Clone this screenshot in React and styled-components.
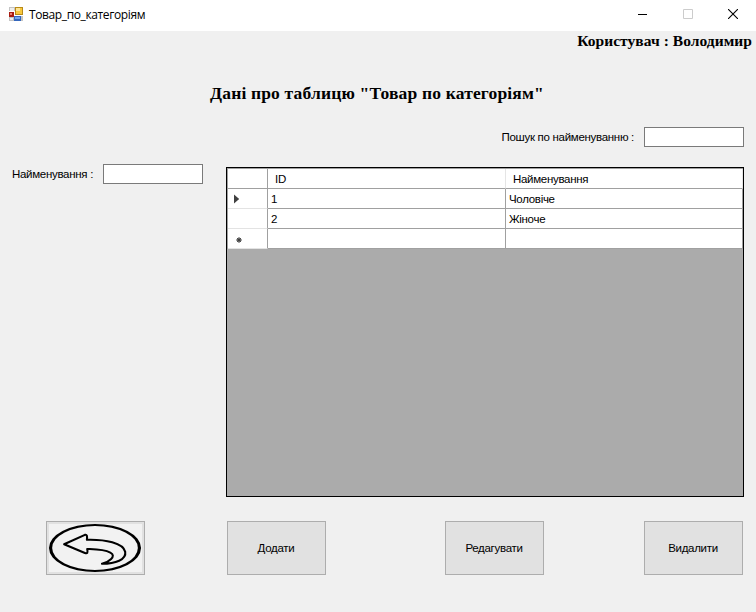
import React from "react";
import styled, { createGlobalStyle } from "styled-components";

const GlobalStyle = createGlobalStyle`
  * { box-sizing: border-box; }
  body { margin: 0; background: #f0f0f0; overflow: hidden; }
`;

const Window = styled.div`
  width: 756px;
  height: 612px;
  display: flex;
  flex-direction: column;
  background: #f0f0f0;
  color: #000;
  font: 11.5px/14px "Liberation Sans", sans-serif;
  letter-spacing: -0.3px;
  white-space: nowrap;
`;

const TitleBar = styled.header`
  height: 31px;
  flex: none;
  display: flex;
  align-items: center;
  background: #fff;
  padding: 0 0 3px 9px;
`;

const WindowTitle = styled.h1`
  margin: 2px auto 0 6px;
  font: 400 12px/16px "Open Sans", sans-serif;
  letter-spacing: -0.38px;
`;

const Controls = styled.div`
  display: flex;
  height: 28px;
`;

const ControlButton = styled.button`
  width: 45.5px;
  padding: 0;
  border: 0;
  background: none;
  display: flex;
  align-items: center;
  justify-content: center;
  color: ${(p) => (p.disabled ? "#ccc" : "#000")};
`;

const UserLabel = styled.div`
  height: 20px;
  padding-right: 4px;
  text-align: right;
  font: bold 15.5px/20px "Liberation Serif", serif;
  letter-spacing: 0.05px;
`;

const Heading = styled.h2`
  margin: 31px 0 0;
  height: 22px;
  padding-right: 2px;
  text-align: center;
  font: bold 17.5px/22px "Liberation Serif", serif;
  letter-spacing: 0.17px;
`;

const SearchRow = styled.div`
  margin-top: 23px;
  padding-right: 12px;
  display: flex;
  justify-content: flex-end;
  align-items: center;
  gap: 10px;
`;

const Label = styled.label`
  margin-top: -1px;
`;

const TextInput = styled.input`
  width: 100px;
  height: 20px;
  padding: 2px;
  border: 1px solid #7a7a7a;
  border-radius: 0;
  background: #fff;
  outline: 0;
`;

const Body = styled.main`
  margin-top: 17px;
  padding: 0 12px;
  display: flex;
  justify-content: space-between;
`;

const Field = styled.div`
  width: 191px;
  height: 20px;
  display: flex;
  align-items: center;
  justify-content: space-between;
`;

const DataGrid = styled.div`
  margin-top: 3px;
  width: 518px;
  height: 330px;
  border: 1px solid #000;
  background: #ababab;
`;

const GridRows = styled.div`
  border-top: 1px solid #a0a0a0;
  border-left: 1px solid #a0a0a0;
`;

const GridRow = styled.div`
  display: grid;
  grid-template-columns: 40px 238px 237px;
  height: 20px;
`;

const Cell = styled.div`
  background: #fff;
  border-right: 1px solid #a0a0a0;
  border-bottom: 1px solid #a0a0a0;
  padding: 3px 0 0 3px;
`;

const HeaderCell = styled(Cell)`
  padding-left: 7px;
  border-right-color: ${(p) => (p.$strong ? "#a0a0a0" : "#e5e5e5")};
`;

const RowHeader = styled(Cell)`
  border-bottom-color: #e3e3e3;
  padding: 0 0 0 5px;
  display: flex;
  align-items: center;
`;

const Footer = styled.footer`
  margin-top: 24px;
  padding: 0 13px 0 46px;
  display: grid;
  grid-template-columns: 181px 218px 199px 99px;
`;

const ActionButton = styled.button`
  width: 99px;
  height: 54px;
  padding: 0 1px 0 0;
  border: 1px solid #adadad;
  border-radius: 0;
  background: ${(p) => (p.$picture ? "#f2f2f2" : "#e1e1e1")};
  box-shadow: ${(p) => (p.$picture ? "inset 0 0 0 2px #e1e1e1" : "none")};
  color: #000;
  font: inherit;
  letter-spacing: inherit;
  display: flex;
  align-items: center;
  justify-content: center;
`;

const FormIcon = () => (
  <svg width="14" height="14" viewBox="0 0 14 14" shapeRendering="crispEdges">
    <path d="M0 0H6V4H0zM0 10H5V14H0zM12 9H14V14H12z" fill="#c4c4c4" />
    <path d="M1 1H5V4H1zM1 11H4V13H1z" fill="#eee" />
    <path d="M0 5H5V10H0z" fill="#a81c12" />
    <path d="M1 6H3V8H1z" fill="#e88170" />
    <path d="M6 0H14V8H6z" fill="#b88a18" />
    <path d="M7 1H13V7H7z" fill="#f7c73c" />
    <path d="M7 1H11V4H7z" fill="#ffe594" />
    <path d="M5 9H12V14H5z" fill="#3467bd" />
    <path d="M6 10H11V12H6z" fill="#76a7ec" />
  </svg>
);

const MinimizeIcon = () => (
  <svg width="10" height="10" shapeRendering="crispEdges">
    <path d="M1 5H10V6H1z" />
    <path d="M10 5H11V6H10z" />
  </svg>
);

const MaximizeIcon = () => (
  <svg width="10" height="10" fill="none" stroke="currentColor">
    <path d="M.5 .5H9.5V9.5H.5z" />
  </svg>
);

const CloseIcon = () => (
  <svg width="10" height="10" fill="none" stroke="currentColor" strokeWidth="1.1">
    <path d="M0 0L10 10M10 0L0 10" />
  </svg>
);

const CurrentRowIcon = () => (
  <svg width="8" height="10">
    <path d="M1 .5L6.2 5L1 9.5z" fill="#404040" />
  </svg>
);

const NewRowIcon = () => (
  <svg width="12" height="12" stroke="#505050" strokeWidth="1">
    <path d="M6 4V10M3 7H9M4 5L8 9M8 5L4 9" />
    <circle cx="6" cy="7" r="1.8" fill="#404040" stroke="none" />
  </svg>
);

const BackIcon = () => (
  <svg width="97" height="52" viewBox="0 0 97 52" fill="none" stroke="#000" strokeLinejoin="round">
    <path
      fillRule="evenodd"
      stroke="none"
      fill="#000"
      d="M2 26A46.5 24.2 0 0 1 95 26A46.5 24.2 0 0 1 2 26zM5.2 26A43.3 22.2 0 0 0 91.8 26A43.3 22.2 0 0 0 5.2 26z"
    />
    <path
      strokeWidth="2.1"
      d="M17.3 22.2L38.3 12.7Q41.2 11.8 40.3 17.7C59 17.2 77 20.8 79 29.8C80.5 38 69 41.8 55.5 42C62 40.5 71 34.2 64 30.6C57.5 27.2 49 27.3 40.6 27Q42 32.5 38.3 31z"
    />
  </svg>
);

const rows = [
  { icon: <CurrentRowIcon />, id: "1", name: "Чоловіче" },
  { icon: null, id: "2", name: "Жіноче" },
  { icon: <NewRowIcon />, id: "", name: "" },
];

export default function App() {
  return (
    <>
      <GlobalStyle />
      <Window>
        <TitleBar>
          <FormIcon />
          <WindowTitle>Товар_по_категоріям</WindowTitle>
          <Controls>
            <ControlButton aria-label="Minimize"><MinimizeIcon /></ControlButton>
            <ControlButton aria-label="Maximize" disabled><MaximizeIcon /></ControlButton>
            <ControlButton aria-label="Close"><CloseIcon /></ControlButton>
          </Controls>
        </TitleBar>
        <UserLabel>Користувач : Володимир</UserLabel>
        <Heading>Дані про таблицю "Товар по категоріям"</Heading>
        <SearchRow>
          <Label htmlFor="search">Пошук по найменуванню :</Label>
          <TextInput id="search" />
        </SearchRow>
        <Body>
          <Field>
            <Label htmlFor="name">Найменування :</Label>
            <TextInput id="name" />
          </Field>
          <DataGrid>
            <GridRows>
              <GridRow>
                <HeaderCell $strong />
                <HeaderCell>ID</HeaderCell>
                <HeaderCell>Найменування</HeaderCell>
              </GridRow>
              {rows.map((row, i) => (
                <GridRow key={i}>
                  <RowHeader>{row.icon}</RowHeader>
                  <Cell>{row.id}</Cell>
                  <Cell>{row.name}</Cell>
                </GridRow>
              ))}
            </GridRows>
          </DataGrid>
        </Body>
        <Footer>
          <ActionButton $picture aria-label="Назад"><BackIcon /></ActionButton>
          <ActionButton>Додати</ActionButton>
          <ActionButton>Редагувати</ActionButton>
          <ActionButton>Видалити</ActionButton>
        </Footer>
      </Window>
    </>
  );
}
